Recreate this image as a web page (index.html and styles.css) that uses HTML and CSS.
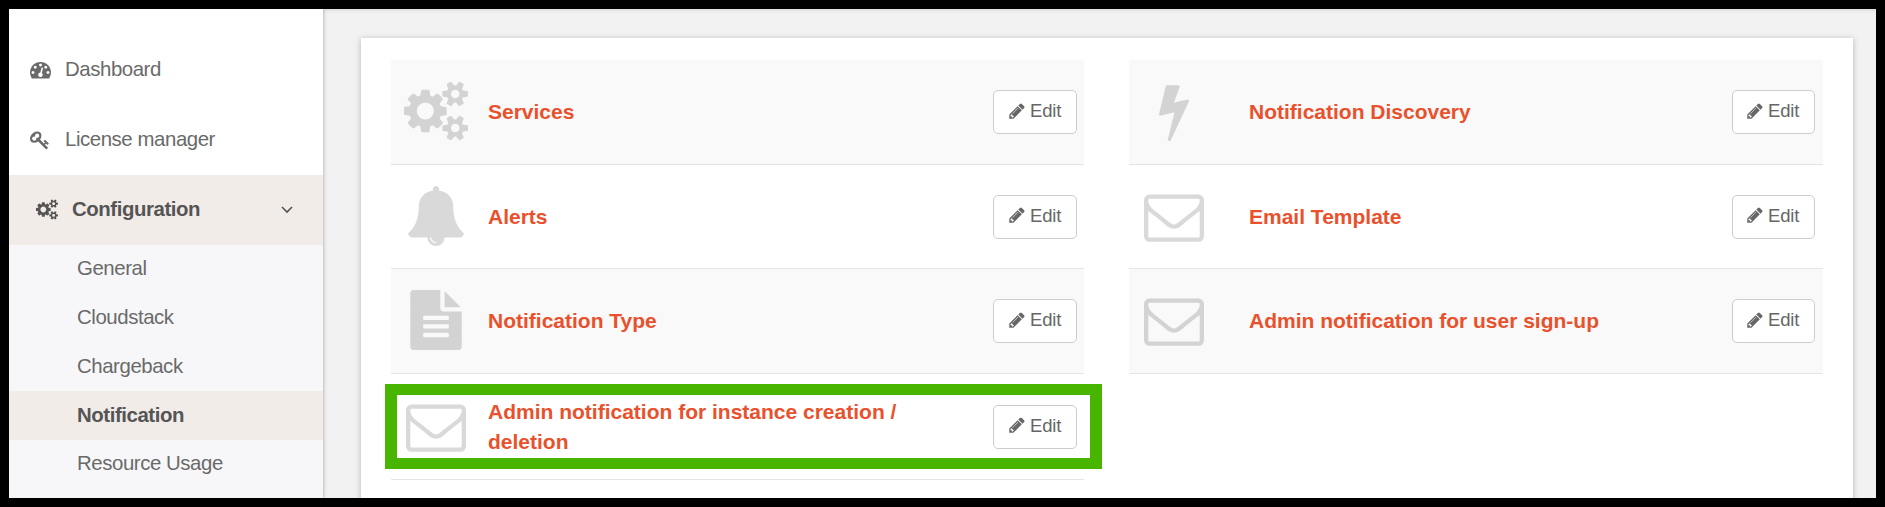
FILE: index.html
```
<!DOCTYPE html>
<html lang="en">
<head>
<meta charset="utf-8">
<title>Notification configuration</title>
<link rel="stylesheet" href="styles.css">
</head>
<body>
<svg class="sprite" aria-hidden="true">
  <symbol id="dashboard" viewBox="0 0 1792 1792"><path d="M384 1152q0-53-37.5-90.5t-90.5-37.5-90.5 37.5-37.5 90.5 37.5 90.5 90.5 37.5 90.5-37.5 37.5-90.5zm192-448q0-53-37.5-90.5t-90.5-37.5-90.5 37.5-37.5 90.5 37.5 90.5 90.5 37.5 90.5-37.5 37.5-90.5zm428 481l101-382q6-26-7.5-48.5t-38.5-29.5-48 6.5-30 39.5l-101 382q-60 5-107 43.5t-63 98.5q-20 77 20 146t117 89 146-20 89-117q16-60-6-117t-72-91zm660-33q0-53-37.5-90.5t-90.5-37.5-90.5 37.5-37.5 90.5 37.5 90.5 90.5 37.5 90.5-37.5 37.5-90.5zm-640-640q0-53-37.5-90.5t-90.5-37.5-90.5 37.5-37.5 90.5 37.5 90.5 90.5 37.5 90.5-37.5 37.5-90.5zm448 192q0-53-37.5-90.5t-90.5-37.5-90.5 37.5-37.5 90.5 37.5 90.5 90.5 37.5 90.5-37.5 37.5-90.5zm320 448q0 261-141 483-19 29-54 29h-1402q-35 0-54-29-141-221-141-483 0-182 71-348t191-286 286-191 348-71 348 71 286 191 191 286 71 348z"/></symbol>
  <symbol id="key" viewBox="0 0 1792 1792"><path d="M832 512q0-80-56-136t-136-56-136 56-56 136q0 42 19 83-41-19-83-19-80 0-136 56t-56 136 56 136 136 56 136-56 56-136q0-42-19-83 41 19 83 19 80 0 136-56t56-136zm851 704q0 17-49 66t-66 49q-9 0-28.5-16t-36.5-33-38.5-40-24.5-26l-96 96 220 220q28 28 28 68 0 42-39 81t-81 39q-40 0-68-28l-671-671q-176 131-365 131-163 0-265.5-102.5t-102.5-265.5q0-160 95-313t248-248 313-95q163 0 265.5 102.5t102.5 265.5q0 189-131 365l355 355 96-96q-3-3-26-24.5t-40-38.5-33-36.5-16-28.5q0-17 49-66t66-49q13 0 23 10 6 6 46 44.5t82 79.5 86.5 86 73 78 28.5 41z"/></symbol>
  <symbol id="cogs" viewBox="-64 0 1920 1792"><path d="M832 896q0-106-75-181t-181-75-181 75-75 181 75 181 181 75 181-75 75-181zm768 512q0-52-38-90t-90-38-90 38-38 90q0 53 37.5 90.5t90.5 37.5 90.5-37.5 37.5-90.5zm0-1024q0-52-38-90t-90-38-90 38-38 90q0 53 37.5 90.5t90.5 37.5 90.5-37.5 37.5-90.5zm-384 421v185q0 10-7 19.5t-16 10.5l-155 24q-11 35-32 76 34 48 90 115 7 11 7 20 0 12-7 19-23 30-82.500 89.500t-78.500 59.500q-11 0-21-7l-115-90q-37 19-77 31-11 108-23 155-7 24-30 24h-186q-11 0-20-7.500t-10-17.500l-23-153q-34-10-75-31l-118 89q-7 7-20 7-11 0-21-8-144-133-144-160 0-9 7-19 10-14 41-53t47-61q-23-44-35-82l-152-24q-10-1-17-9.500t-7-19.500v-185q0-10 7-19.500t16-10.500l155-24q11-35 32-76-34-48-90-115-7-11-7-20 0-12 7-20 22-30 82-89t79-59q11 0 21 7l115 90q34-18 77-32 11-108 23-154 7-24 30-24h186q11 0 20 7.500t10 17.500l23 153q34 10 75 31l118-89q8-7 20-7 11 0 21 8 144 133 144 160 0 8-7 19-12 16-42 54t-45 60q23 48 34 82l152 23q10 2 17 10.500t7 19.500zm640 533v140q0 16-149 31-12 27-30 52 51 113 51 138 0 4-4 7-122 71-124 71-8 0-46-47t-52-68q-20 2-30 2t-30-2q-14 21-52 68t-46 47q-2 0-124-71-4-3-4-7 0-25 51-138-18-25-30-52-149-15-149-31v-140q0-16 149-31 13-29 30-52-51-113-51-138 0-4 4-7 4-2 35-20t59-34 30-16q8 0 46 46.500t52 67.500q20-2 30-2t30 2q51-71 92-112l6-2q4 0 124 70 4 3 4 7 0 25-51 138 17 23 30 52 149 15 149 31zm0-1024v140q0 16-149 31-12 27-30 52 51 113 51 138 0 4-4 7-122 71-124 71-8 0-46-47t-52-68q-20 2-30 2t-30-2q-14 21-52 68t-46 47q-2 0-124-71-4-3-4-7 0-25 51-138-18-25-30-52-149-15-149-31v-140q0-16 149-31 13-29 30-52-51-113-51-138 0-4 4-7 4-2 35-20t59-34 30-16q8 0 46 46.500t52 67.500q20-2 30-2t30 2q51-71 92-112l6-2q4 0 124 70 4 3 4 7 0 25-51 138 17 23 30 52 149 15 149 31z"/></symbol>
  <symbol id="bell" viewBox="0 0 1792 1792"><path d="M912 1696q0-16-16-16-59 0-101.5-42.5t-42.5-101.5q0-16-16-16t-16 16q0 73 51.5 124.5t124.5 51.5q16 0 16-16zm816-288q0 52-38 90t-90 38h-448q0 106-75 181t-181 75-181-75-75-181h-448q-52 0-90-38t-38-90q50-42 91-88t85-119.5 74.5-158.5 50-206 19.5-260q0-152 117-282.5t307-158.5q-8-19-8-39 0-40 28-68t68-28 68 28 28 68q0 20-8 39 190 28 307 158.5t117 282.5q0 139 19.5 260t50 206 74.5 158.5 85 119.5 91 88z"/></symbol>
  <symbol id="file" viewBox="0 0 1792 1792"><path d="M1596 476q14 14 28 36h-472v-472q22 14 36 28zm-476 164h544v1056q0 40-28 68t-68 28h-1344q-40 0-68-28t-28-68v-1600q0-40 28-68t68-28h800v544q0 40 28 68t68 28zm160 736v-64q0-14-9-23t-23-9h-704q-14 0-23 9t-9 23v64q0 14 9 23t23 9h704q14 0 23-9t9-23zm0-256v-64q0-14-9-23t-23-9h-704q-14 0-23 9t-9 23v64q0 14 9 23t23 9h704q14 0 23-9t9-23zm0-256v-64q0-14-9-23t-23-9h-704q-14 0-23 9t-9 23v64q0 14 9 23t23 9h704q14 0 23-9t9-23z"/></symbol>
  <symbol id="bolt" viewBox="0 0 1792 1792"><path d="M1333 566q18 20 7 44l-540 1157q-13 25-42 25-4 0-14-2-17-5-25.5-19t-4.500-30l197-808-406 101q-4 1-12 1-18 0-31-11-18-15-13-39l201-825q4-14 16-23t28-9h328q19 0 32 12.500t13 29.500q0 8-5 18l-171 463 396-98q8-2 12-2 19 0 34 15z"/></symbol>
  <symbol id="envelope" viewBox="0 0 1792 1792"><path d="M1664 1504v-768q-32 36-69 66-268 206-426 338-51 43-83 67t-86.5 48.5-102.5 24.5h-2q-48 0-102.5-24.5t-86.500-48.500-83-67q-158-132-426-338-37-30-69-66v768q0 13 9.500 22.500t22.500 9.500h1472q13 0 22.500-9.500t9.500-22.500zm0-1051v-24.500l-.5-13-3-12.500-5.500-9-9-7.500-14-2.500h-1472q-13 0-22.500 9.500t-9.500 22.500q0 168 147 284 193 152 401 317 6 5 35 29.500t46 37.500 44.500 31.500 50.500 27.500 43 9h2q20 0 43-9t50.500-27.500 44.500-31.500 46-37.500 35-29.500q208-165 401-317 54-43 100.500-115.500t46.500-131.500zm128-37v1088q0 66-47 113t-113 47h-1472q-66 0-113-47t-47-113v-1088q0-66 47-113t113-47h1472q66 0 113 47t47 113z"/></symbol>
  <symbol id="pencil" viewBox="128 0 1536 1792"><path d="M491 1536l91-91-235-235-91 91v107h128v128h107zm523-928q0-22-22-22-10 0-17 7l-542 542q-7 7-7 17 0 22 22 22 10 0 17-7l542-542q7-7 7-17zm-54-192l416 416-832 832h-416v-416zm683 96q0 53-37 90l-166 166-416-416 166-165q36-38 90-38 53 0 91 38l235 234q37 39 37 91z"/></symbol>
</svg>

<div class="app">
  <nav class="sidebar">
    <a class="nav-item"><svg class="nav-icon"><use href="#dashboard"/></svg><span class="nav-label">Dashboard</span></a>
    <a class="nav-item"><svg class="nav-icon nav-key"><use href="#key"/></svg><span class="nav-label">License manager</span></a>
    <a class="nav-item nav-open"><svg class="nav-icon nav-cogs"><use href="#cogs"/></svg><span class="nav-label">Configuration</span>
      <svg class="chevron" viewBox="0 0 12 8"><path d="M1 1l5 5 5-5"/></svg></a>
    <div class="submenu">
      <a class="sub-item">General</a>
      <a class="sub-item">Cloudstack</a>
      <a class="sub-item">Chargeback</a>
      <a class="sub-item sub-active">Notification</a>
      <a class="sub-item">Resource Usage</a>
    </div>
  </nav>

  <main class="content">
    <section class="card">
      <div class="list">
        <div class="row row-first shaded"><svg class="row-icon row-cogs"><use href="#cogs"/></svg><h2 class="title">Services</h2><button class="edit"><svg class="pencil"><use href="#pencil"/></svg>Edit</button></div>
        <div class="row row-second"><svg class="row-icon"><use href="#bell"/></svg><h2 class="title">Alerts</h2><button class="edit"><svg class="pencil"><use href="#pencil"/></svg>Edit</button></div>
        <div class="row shaded"><svg class="row-icon"><use href="#file"/></svg><h2 class="title">Notification Type</h2><button class="edit"><svg class="pencil"><use href="#pencil"/></svg>Edit</button></div>
        <div class="row row-last"><svg class="row-icon"><use href="#envelope"/></svg><h2 class="title">Admin notification for instance creation / deletion</h2><button class="edit"><svg class="pencil"><use href="#pencil"/></svg>Edit</button><div class="highlight"></div></div>
      </div>
      <div class="list list-right">
        <div class="row row-first shaded"><svg class="row-icon"><use href="#bolt"/></svg><h2 class="title">Notification Discovery</h2><button class="edit"><svg class="pencil"><use href="#pencil"/></svg>Edit</button></div>
        <div class="row row-second"><svg class="row-icon"><use href="#envelope"/></svg><h2 class="title">Email Template</h2><button class="edit"><svg class="pencil"><use href="#pencil"/></svg>Edit</button></div>
        <div class="row shaded"><svg class="row-icon"><use href="#envelope"/></svg><h2 class="title">Admin notification for user sign-up</h2><button class="edit"><svg class="pencil"><use href="#pencil"/></svg>Edit</button></div>
      </div>
    </section>
  </main>
</div>
</body>
</html>
```

FILE: styles.css
```
* { box-sizing: border-box; }
body { margin: 0; font-family: "Liberation Sans", Arial, sans-serif; overflow: hidden; }
.sprite { display: none; }
svg { fill: currentColor; flex: none; }

.app {
  display: flex;
  width: 1885px;
  height: 507px;
  border: 9px solid #000;
  background: #f2f2f2;
  overflow: hidden;
}

.sidebar {
  position: relative;
  width: 314px;
  padding-top: 26px;
  background: #fff;
  box-shadow: 0 0 4px rgba(0, 0, 0, .35);
  color: #6a6a6a;
  font-size: 20.4px;
  letter-spacing: -.43px;
}
.nav-item { display: flex; align-items: center; height: 70px; padding-left: 21px; }
.nav-icon { width: 21px; height: 21px; margin: 0 14px 1px 0; }
.nav-key { width: 20px; height: 20px; margin: 0 15px 0 0; }
.nav-label { padding-bottom: 2px; }
.nav-open {
  padding-left: 27px;
  background: #f2ece9;
  color: #555;
  font-weight: bold;
}
.nav-cogs { width: 22px; margin: 0 14px 2px 0; }
.chevron {
  width: 12px;
  height: 8px;
  margin: 0 30px 0 auto;
  fill: none;
  stroke: #555;
  stroke-width: 1.6;
}
.submenu { height: 260px; background: #f7f7f9; }
.sub-item { display: flex; align-items: center; height: 48.75px; padding: 0 0 1px 68px; }
.sub-active { background: #f2ece9; color: #555; font-weight: bold; }

.content { flex: 1; padding: 29px 23px 0 38px; box-shadow: inset 0 4px 4px -3px rgba(0, 0, 0, .12); }
.card {
  display: grid;
  grid-template-columns: 693px 694px;
  column-gap: 45px;
  height: 480px;
  padding: 22px 30px 0;
  background: #fff;
  box-shadow: 0 1px 6px rgba(0, 0, 0, .25);
}
.row {
  display: flex;
  align-items: center;
  height: 105px;
  padding: 0 7px 0 15px;
  border-bottom: 1px solid #e6e6e6;
}
.row-first { border-color: #e0e4e9; }
.row-second { height: 104px; }
.row-last { position: relative; height: 106px; }
.shaded { background: #f9f9f9; }
.row-icon { width: 60px; height: 60px; margin: 0 22px 2px 0; color: #d9d9d9; }
.shaded .row-icon { color: #d3d3d3; }
.row-cogs { width: 64px; margin: 0 20px 2px -2px; }
.title {
  flex: 1;
  margin: 0;
  padding-right: 80px;
  color: #e9512c;
  font-size: 21px;
  line-height: 30px;
}
.list-right .row { padding-right: 8px; }
.list-right .row-icon { margin-right: 45px; }
.edit {
  display: flex;
  align-items: center;
  width: 84px;
  height: 44px;
  padding: 0 0 2px 15px;
  border: 1px solid #ccc;
  border-radius: 5px;
  background: #fff;
  color: #666;
  font: 18.5px "Liberation Sans", Arial, sans-serif;
  letter-spacing: -.15px;
}
.list-right .edit { width: 83px; padding-left: 14px; }
.pencil { width: 16px; height: 18px; margin: 0 5px 1px 0; }

/* Green frame drawn over the selected row */
.highlight {
  position: absolute;
  top: 10px;
  left: -6px;
  width: 717px;
  height: 85px;
  border: 12px solid #48b500;
  border-width: 11px 12px;
}
```
